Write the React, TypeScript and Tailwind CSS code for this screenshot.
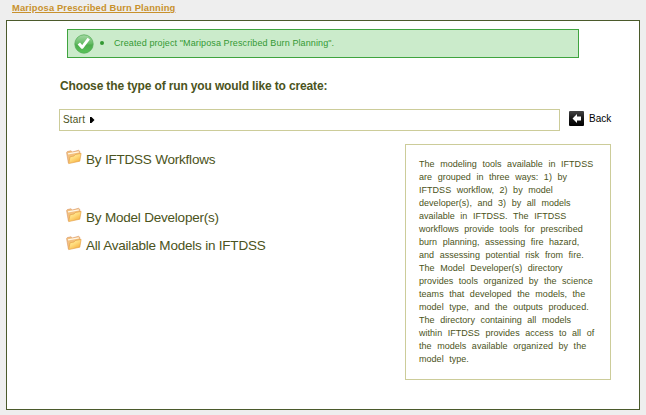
const description = [
  "The modeling tools available in IFTDSS",
  "are grouped in three ways: 1) by",
  "IFTDSS workflow, 2) by model",
  "developer(s), and 3) by all models",
  "available in IFTDSS. The IFTDSS",
  "workflows provide tools for prescribed",
  "burn planning, assessing fire hazard,",
  "and assessing potential risk from fire.",
  "The Model Developer(s) directory",
  "provides tools organized by the science",
  "teams that developed the models, the",
  "model type, and the outputs produced.",
  "The directory containing all models",
  "within IFTDSS provides access to all of",
  "the models available organized by the",
  "model type.",
];

function SuccessIcon() {
  return (
    <svg width="20" height="20" viewBox="0 0 20 20" className="shrink-0">
      <defs>
        <linearGradient id="ok" x1="0" y1="0" x2="0" y2="1">
          <stop offset="0" stopColor="#a5d8a5" />
          <stop offset="0.5" stopColor="#62bb62" />
          <stop offset="0.55" stopColor="#4dac4d" />
          <stop offset="1" stopColor="#58c458" />
        </linearGradient>
      </defs>
      <circle cx="10" cy="10" r="9.2" fill="url(#ok)" stroke="#55ad58" strokeWidth="0.8" />
      <path d="M3.6 10.6 6 8.6l2.2 2.4 5.4-7.2 2.3 1.6-7 9.4H7.4z" fill="#fff" />
    </svg>
  );
}

function FolderIcon() {
  return (
    <svg width="16" height="16" viewBox="0 0 16 16" className="shrink-0">
      <defs>
        <linearGradient id="front" x1="0" y1="0" x2="0.7" y2="1">
          <stop offset="0" stopColor="#fff1a6" />
          <stop offset="0.5" stopColor="#ffdc7e" />
          <stop offset="1" stopColor="#f5ae3c" />
        </linearGradient>
      </defs>
      <path d="M2.4 14 .6 3.6 1.3 2.6l3.8-.8L6.3 3 12.6 1.3l1.1.9.5 3.4z" fill="#f3c07c" stroke="#dc9f72" strokeWidth="0.7" />
      <path d="M2 4.9 12.8 2.9" stroke="#fff6e6" strokeWidth="1.3" />
      <path d="M2.7 14.6 4 7.8l4-.8 1.2-1.5 5.9-1.1-1.3 7.8z" fill="url(#front)" stroke="#e39b40" strokeWidth="0.6" />
    </svg>
  );
}

function BackIcon() {
  return (
    <svg width="15" height="15" viewBox="0 0 15 15" className="shrink-0">
      <defs>
        <linearGradient id="dark" x1="0" y1="0" x2="0" y2="1">
          <stop offset="0" stopColor="#444" />
          <stop offset="0.5" stopColor="#171717" />
          <stop offset="1" stopColor="#000" />
        </linearGradient>
      </defs>
      <rect width="15" height="15" rx="1" fill="url(#dark)" />
      <path d="M3.5 7.5 8 3v2.5h4v4H8V12z" fill="#fff" />
    </svg>
  );
}

function Entry({ label, className }: { label: string; className: string }) {
  return (
    <a className={`flex h-[20px] items-start ${className}`}>
      <FolderIcon />
      <span className="ml-[4px] mt-[1px] whitespace-nowrap text-[13.5px] leading-[19px]">{label}</span>
    </a>
  );
}

export default function App() {
  return (
    <div className="h-[415px] w-[646px] overflow-hidden bg-[#eeeeee] font-['Liberation_Sans',Arial,sans-serif] text-[#4b5320]">
      <header className="flex h-[20px] pl-[12px] pt-[2px]">
        <a className="text-[9.33px] font-bold leading-[12px] tracking-[0.16px] text-[#c8912c] underline">Mariposa Prescribed Burn Planning</a>
      </header>
      <main className="ml-[6px] h-[390px] w-[634px] border border-[#4b5a2b] bg-white">
        <div className="ml-[60px] mt-[8px] flex h-[29px] w-[512px] items-center border border-[#3fa43f] bg-[#cbebcb] pl-[6px] text-[9px] text-[#339933]">
          <SuccessIcon />
          <span className="-mt-[2px] ml-[6px] size-[4px] rounded-full bg-[#339933]" />
          <span className="ml-[10px] tracking-[0.11px]">Created project "Mariposa Prescribed Burn Planning".</span>
        </div>
        <h1 className="ml-[53px] mt-[20px] text-[12px] font-bold leading-[16px] tracking-[-0.14px]">Choose the type of run you would like to create:</h1>
        <div className="ml-[52px] mt-[15px] flex h-[22px]">
          <div className="flex w-[501px] items-center border border-[#cccc99] pb-px pl-[3px] text-[10px]">
            <span className="tracking-[0.2px]">Start</span>
            <svg width="5" height="6" viewBox="0 0 5 6" className="ml-[5px] mt-px">
              <path d="M0 0h1.5L4.5 3 1.5 6H0z" fill="#000" />
            </svg>
          </div>
          <a className="ml-[9px] flex h-[19px] items-center text-[10px] text-black">
            <BackIcon />
            <span className="ml-[5px]">Back</span>
          </a>
        </div>
        <div className="flex">
          <nav className="ml-[59px] w-[339px] pt-[18px] tracking-[-0.21px]">
            <Entry label="By IFTDSS Workflows" className="mb-[38px]" />
            <Entry label="By Model Developer(s)" className="mb-[8px]" />
            <Entry label="All Available Models in IFTDSS" className="" />
          </nav>
          <aside className="mt-[13px] h-[236px] w-[206px] border border-[#cccc99] pl-[13px] pt-[13px] text-[9px] leading-[13px] tracking-[0.03px] [word-spacing:3px]">
            {description.map((line) => (
              <p key={line} className="whitespace-nowrap">{line}</p>
            ))}
          </aside>
        </div>
      </main>
    </div>
  );
}
